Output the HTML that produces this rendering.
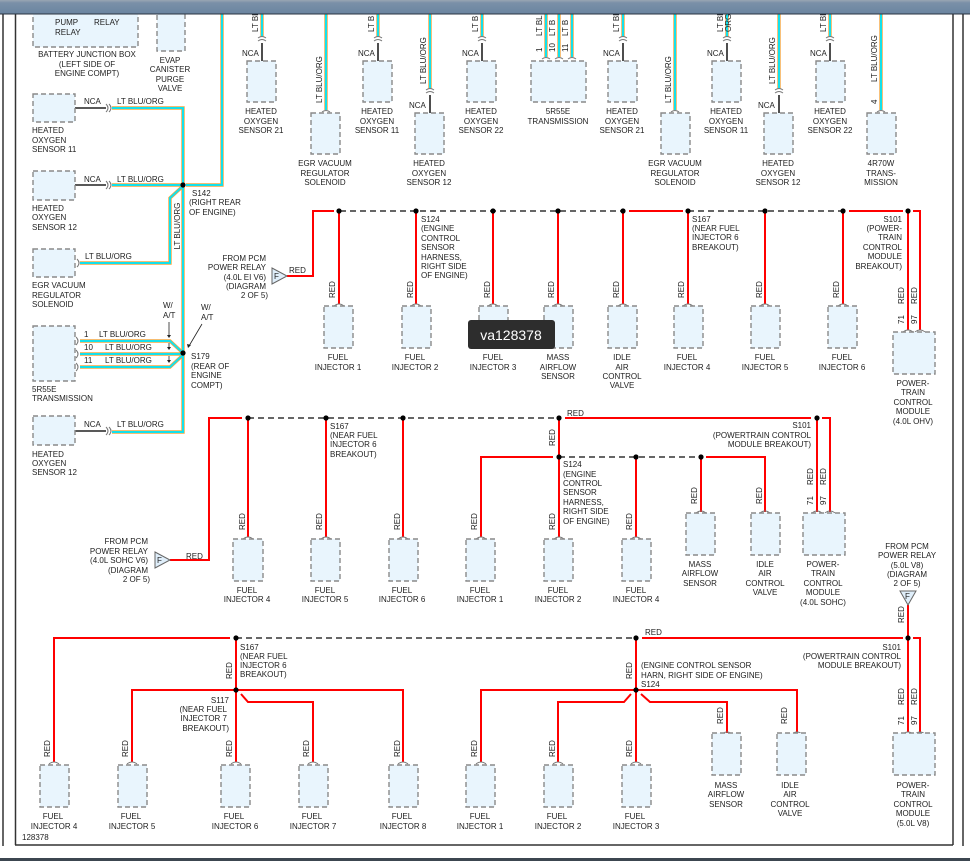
<!DOCTYPE html>
<html><head><meta charset="utf-8"><style>
html,body{margin:0;padding:0;background:#fff;width:970px;height:861px;overflow:hidden}
svg{display:block}
text{font-family:"Liberation Sans",sans-serif;font-size:8px;fill:#222}
.b{fill:#e9f5fd;stroke:#8a8a8a;stroke-width:1.4;stroke-dasharray:5 3}
.r{stroke:#f00;stroke-width:2;fill:none}
.d{stroke:#333;stroke-width:1.4;stroke-dasharray:6 4;fill:none}
.k{stroke:#222;stroke-width:1.6;fill:none}
.o{stroke:#f4a640;stroke-width:3.4;fill:none}
.c{stroke:#13e0ec;stroke-width:2;fill:none}
.a{stroke:#777;stroke-width:1;fill:none}
.m{text-anchor:middle}.e{text-anchor:end}
</style></head><body>
<svg width="970" height="861" viewBox="0 0 970 861" xmlns="http://www.w3.org/2000/svg">
<defs><linearGradient id="g" x1="0" y1="0" x2="0" y2="1"><stop offset="0" stop-color="#9aa6b3"/><stop offset="0.2" stop-color="#7a90a8"/><stop offset="1" stop-color="#6a84a0"/></linearGradient></defs>
<rect width="970" height="861" fill="#fff"/>
<!-- frame -->
<line x1="3" y1="14" x2="3" y2="846" stroke="#333" stroke-width="1.5"/>
<line x1="15.5" y1="14" x2="15.5" y2="845" stroke="#333" stroke-width="1.5"/>
<line x1="15" y1="845" x2="953" y2="845" stroke="#333" stroke-width="1.5"/>
<line x1="953" y1="14" x2="953" y2="845" stroke="#333" stroke-width="1.5"/>
<line x1="963" y1="14" x2="963" y2="846" stroke="#333" stroke-width="1.5"/>
<rect x="0" y="858" width="970" height="3" fill="#3c4650"/>

<!-- ===== TOP LEFT ===== -->
<rect class="b" x="33" y="2" width="105" height="45"/>
<text x="55" y="25">PUMP</text><text x="94" y="25">RELAY</text><text x="55" y="35">RELAY</text>
<text class="m" x="87" y="57">BATTERY JUNCTION BOX</text><text class="m" x="87" y="67">(LEFT SIDE OF</text><text class="m" x="87" y="76">ENGINE COMPT)</text>
<rect class="b" x="157" y="2" width="28" height="49"/>
<text class="m" x="170" y="63">EVAP</text><text class="m" x="170" y="72">CANISTER</text><text class="m" x="170" y="82">PURGE</text><text class="m" x="170" y="91">VALVE</text>

<!-- cyan wires left -->
<g>
<path class="o" d="M222 14V185H186M112 108H183V432H112M112 185H183M80 263H170V198L183 186M80 341H170L183 353M80 354H183M80 367H170L183 355"/>
<path class="c" d="M222 14V185H186M112 108H183V432H112M112 185H183M80 263H170V198L183 186M80 341H170L183 353M80 354H183M80 367H170L183 355"/>
</g>
<path class="k" d="M75 108H106M75 185H106M75 431H106"/>
<path class="a" d="M106 104q4 4 0 8M109 104q4 4 0 8M106 181q4 4 0 8M109 181q4 4 0 8M106 427q4 4 0 8M109 427q4 4 0 8M77 259q4 4 0 8M76 337q4 4 0 8M76 350q4 4 0 8M76 363q4 4 0 8"/>
<circle cx="183" cy="185" r="2.6" fill="#000"/><circle cx="183" cy="353" r="2.6" fill="#000"/>
<rect class="b" x="33" y="94" width="42" height="28"/>
<text x="84" y="104">NCA</text><text x="117" y="104">LT BLU/ORG</text>
<text x="32" y="133">HEATED</text><text x="32" y="143">OXYGEN</text><text x="32" y="152">SENSOR 11</text>
<rect class="b" x="33" y="171" width="42" height="29"/>
<text x="84" y="182">NCA</text><text x="117" y="182">LT BLU/ORG</text>
<text x="32" y="211">HEATED</text><text x="32" y="220">OXYGEN</text><text x="32" y="230">SENSOR 12</text>
<text transform="rotate(-90 180 226)" class="m" x="180" y="226">LT BLU/ORG</text>
<text x="192" y="196">S142</text><text x="189" y="205">(RIGHT REAR</text><text x="189" y="215">OF ENGINE)</text>
<rect class="b" x="33" y="249" width="42" height="28"/>
<text x="85" y="259">LT BLU/ORG</text>
<text x="32" y="288">EGR VACUUM</text><text x="32" y="298">REGULATOR</text><text x="32" y="307">SOLENOID</text>
<rect class="b" x="33" y="326" width="42" height="55"/>
<text x="32" y="392">5R55E</text><text x="32" y="401">TRANSMISSION</text>
<text x="84" y="337">1</text><text x="99" y="337">LT BLU/ORG</text>
<text x="84" y="350">10</text><text x="105" y="350">LT BLU/ORG</text>
<text x="84" y="363">11</text><text x="105" y="363">LT BLU/ORG</text>
<text x="163" y="308">W/</text><text x="163" y="318">A/T</text>
<text x="201" y="310">W/</text><text x="201" y="320">A/T</text>
<path stroke="#222" stroke-width="0.8" fill="none" d="M169 322V337M202 324L189 346M169 343V349M169 356V362"/>
<path fill="#222" d="M167 335h4l-2 3zM167 347h4l-2 3zM167 360h4l-2 3zM187 344l4 1-3 3z"/>
<text x="191" y="359">S179</text><text x="191" y="369">(REAR OF</text><text x="191" y="378">ENGINE</text><text x="191" y="388">COMPT)</text>
<rect class="b" x="33" y="416" width="42" height="29"/>
<text x="84" y="427">NCA</text><text x="117" y="427">LT BLU/ORG</text>
<text x="32" y="457">HEATED</text><text x="32" y="466">OXYGEN</text><text x="32" y="475">SENSOR 12</text>

<!-- ===== TOP ROW SENSORS ===== -->
<g>
<path class="o" d="M262 14V37M326 14V110M378 14V37M430 14V89M482 14V37M546 14V57M559 14V57M572 14V57M623 14V37M675 14V110M727 14V37M779 14V89M830 14V37M881 14V110"/>
<path class="c" d="M262 14V37M326 14V110M378 14V37M430 14V89M482 14V37M546 14V57M559 14V57M572 14V57M623 14V37M675 14V110M727 14V37M779 14V89M830 14V37M881 14V110"/>
</g>
<path class="k" d="M262 43V61M378 43V61M482 43V61M623 43V61M727 43V61M830 43V61M430 95V113M779 95V113"/>
<path class="a" d="M258 38q4 -3 8 0M258 41q4 -3 8 0M374 38q4 -3 8 0M374 41q4 -3 8 0M478 38q4 -3 8 0M478 41q4 -3 8 0M619 38q4 -3 8 0M619 41q4 -3 8 0M723 38q4 -3 8 0M723 41q4 -3 8 0M826 38q4 -3 8 0M826 41q4 -3 8 0M426 90q4 -3 8 0M426 93q4 -3 8 0M775 90q4 -3 8 0M775 93q4 -3 8 0M322 112q4 -3 8 0M671 112q4 -3 8 0M877 112q4 -3 8 0M542 59q4 -3 8 0M555 59q4 -3 8 0M568 59q4 -3 8 0"/>
<g>
<text x="242" y="56">NCA</text><text x="358" y="56">NCA</text><text x="462" y="56">NCA</text><text x="603" y="56">NCA</text><text x="707" y="56">NCA</text><text x="810" y="56">NCA</text>
<text x="409" y="108">NCA</text><text x="758" y="108">NCA</text>
<text transform="rotate(-90 258 32)" x="258" y="32">LT BL</text>
<text transform="rotate(-90 374 32)" x="374" y="32">LT B</text>
<text transform="rotate(-90 478 32)" x="478" y="32">LT B</text>
<text transform="rotate(-90 619 32)" x="619" y="32">LT BL</text>
<text transform="rotate(-90 723 32)" x="723" y="32">LT BL</text>
<text transform="rotate(-90 731 32)" x="731" y="32">ORG</text>
<text transform="rotate(-90 826 32)" x="826" y="32">LT BL</text>
<text transform="rotate(-90 542 36)" x="542" y="36">LT BL</text>
<text transform="rotate(-90 555 36)" x="555" y="36">LT B</text>
<text transform="rotate(-90 568 36)" x="568" y="36">LT B</text>
<text transform="rotate(-90 542 52)" x="542" y="52">1</text>
<text transform="rotate(-90 555 52)" x="555" y="52">10</text>
<text transform="rotate(-90 568 52)" x="568" y="52">11</text>
<text transform="rotate(-90 322 103)" x="322" y="103">LT BLU/ORG</text>
<text transform="rotate(-90 426 84)" x="426" y="84">LT BLU/ORG</text>
<text transform="rotate(-90 671 103)" x="671" y="103">LT BLU/ORG</text>
<text transform="rotate(-90 775 84)" x="775" y="84">LT BLU/ORG</text>
<text transform="rotate(-90 877 82)" x="877" y="82">LT BLU/ORG</text>
<text transform="rotate(-90 877 104)" x="877" y="104">4</text>
</g>
<rect class="b" x="247" y="61" width="29" height="41"/><rect class="b" x="311" y="113" width="29" height="41"/>
<rect class="b" x="363" y="61" width="29" height="41"/><rect class="b" x="415" y="113" width="29" height="41"/>
<rect class="b" x="467" y="61" width="29" height="41"/><rect class="b" x="531" y="61" width="55" height="41"/>
<rect class="b" x="608" y="61" width="29" height="41"/><rect class="b" x="661" y="113" width="29" height="41"/>
<rect class="b" x="712" y="61" width="29" height="41"/><rect class="b" x="764" y="113" width="29" height="41"/>
<rect class="b" x="816" y="61" width="29" height="41"/><rect class="b" x="867" y="113" width="29" height="41"/>
<g class="m">
<text class="m" x="261" y="114">HEATED</text><text class="m" x="261" y="124">OXYGEN</text><text class="m" x="261" y="133">SENSOR 21</text>
<text class="m" x="325" y="166">EGR VACUUM</text><text class="m" x="325" y="176">REGULATOR</text><text class="m" x="325" y="185">SOLENOID</text>
<text class="m" x="377" y="114">HEATED</text><text class="m" x="377" y="124">OXYGEN</text><text class="m" x="377" y="133">SENSOR 11</text>
<text class="m" x="429" y="166">HEATED</text><text class="m" x="429" y="176">OXYGEN</text><text class="m" x="429" y="185">SENSOR 12</text>
<text class="m" x="481" y="114">HEATED</text><text class="m" x="481" y="124">OXYGEN</text><text class="m" x="481" y="133">SENSOR 22</text>
<text class="m" x="558" y="114">5R55E</text><text class="m" x="558" y="124">TRANSMISSION</text>
<text class="m" x="622" y="114">HEATED</text><text class="m" x="622" y="124">OXYGEN</text><text class="m" x="622" y="133">SENSOR 21</text>
<text class="m" x="675" y="166">EGR VACUUM</text><text class="m" x="675" y="176">REGULATOR</text><text class="m" x="675" y="185">SOLENOID</text>
<text class="m" x="726" y="114">HEATED</text><text class="m" x="726" y="124">OXYGEN</text><text class="m" x="726" y="133">SENSOR 11</text>
<text class="m" x="778" y="166">HEATED</text><text class="m" x="778" y="176">OXYGEN</text><text class="m" x="778" y="185">SENSOR 12</text>
<text class="m" x="830" y="114">HEATED</text><text class="m" x="830" y="124">OXYGEN</text><text class="m" x="830" y="133">SENSOR 22</text>
<text class="m" x="881" y="166">4R70W</text><text class="m" x="881" y="176">TRANS-</text><text class="m" x="881" y="185">MISSION</text>
</g>

<!-- ===== SECTION 1 (4.0L EI V6) ===== -->
<path class="r" d="M287 276H313V211H334M629 211H683M849 211H903M913 211H920V330M908 211V330M339 211V304M416 211V304M493 211V304M558 211V304M623 211V304M688 211V304M765 211V304M843 211V304"/>
<path class="d" d="M340 211H625M688 211H843"/>
<g fill="#000"><circle cx="339" cy="211" r="2.6"/><circle cx="416" cy="211" r="2.6"/><circle cx="493" cy="211" r="2.6"/><circle cx="558" cy="211" r="2.6"/><circle cx="623" cy="211" r="2.6"/><circle cx="688" cy="211" r="2.6"/><circle cx="765" cy="211" r="2.6"/><circle cx="843" cy="211" r="2.6"/><circle cx="908" cy="211" r="2.6"/></g>
<path d="M272 268L287 276L272 284Z" fill="#dfeefa" stroke="#666"/><text x="274" y="279">F</text>
<text class="e" x="266" y="261">FROM PCM</text><text class="e" x="266" y="270">POWER RELAY</text><text class="e" x="266" y="280">(4.0L EI V6)</text><text class="e" x="266" y="289">(DIAGRAM</text><text class="e" x="268" y="298">2 OF 5)</text>
<text x="289" y="273">RED</text>
<text x="421" y="222">S124</text><text x="421" y="231">(ENGINE</text><text x="421" y="241">CONTROL</text><text x="421" y="250">SENSOR</text><text x="421" y="260">HARNESS,</text><text x="421" y="269">RIGHT SIDE</text><text x="421" y="278">OF ENGINE)</text>
<text x="692" y="222">S167</text><text x="692" y="231">(NEAR FUEL</text><text x="692" y="240">INJECTOR 6</text><text x="692" y="250">BREAKOUT)</text>
<text class="e" x="902" y="222">S101</text><text class="e" x="902" y="231">(POWER-</text><text class="e" x="902" y="240">TRAIN</text><text class="e" x="902" y="250">CONTROL</text><text class="e" x="902" y="259">MODULE</text><text class="e" x="902" y="269">BREAKOUT)</text>
<g>
<text transform="rotate(-90 335 298)" x="335" y="298">RED</text><text transform="rotate(-90 413 298)" x="413" y="298">RED</text><text transform="rotate(-90 490 298)" x="490" y="298">RED</text><text transform="rotate(-90 554 298)" x="554" y="298">RED</text><text transform="rotate(-90 619 298)" x="619" y="298">RED</text><text transform="rotate(-90 684 298)" x="684" y="298">RED</text><text transform="rotate(-90 762 298)" x="762" y="298">RED</text><text transform="rotate(-90 839 298)" x="839" y="298">RED</text>
<text transform="rotate(-90 904 304)" x="904" y="304">RED</text><text transform="rotate(-90 917 304)" x="917" y="304">RED</text>
<text transform="rotate(-90 904 324)" x="904" y="324">71</text><text transform="rotate(-90 917 324)" x="917" y="324">97</text>
</g>
<path class="a" d="M334 306q5 -4 10 0M411 306q5 -4 10 0M488 306q5 -4 10 0M553 306q5 -4 10 0M618 306q5 -4 10 0M683 306q5 -4 10 0M760 306q5 -4 10 0M838 306q5 -4 10 0M903 332q5 -4 10 0M915 332q5 -4 10 0"/>
<rect class="b" x="324" y="306" width="29" height="42"/><rect class="b" x="402" y="306" width="29" height="42"/><rect class="b" x="479" y="306" width="29" height="42"/><rect class="b" x="544" y="306" width="29" height="42"/><rect class="b" x="608" y="306" width="29" height="42"/><rect class="b" x="674" y="306" width="29" height="42"/><rect class="b" x="751" y="306" width="29" height="42"/><rect class="b" x="828" y="306" width="29" height="42"/>
<rect class="b" x="893" y="332" width="42" height="42"/>
<text class="m" x="338" y="360">FUEL</text><text class="m" x="338" y="370">INJECTOR 1</text>
<text class="m" x="415" y="360">FUEL</text><text class="m" x="415" y="370">INJECTOR 2</text>
<text class="m" x="493" y="360">FUEL</text><text class="m" x="493" y="370">INJECTOR 3</text>
<text class="m" x="558" y="360">MASS</text><text class="m" x="558" y="370">AIRFLOW</text><text class="m" x="558" y="379">SENSOR</text>
<text class="m" x="622" y="360">IDLE</text><text class="m" x="622" y="370">AIR</text><text class="m" x="622" y="379">CONTROL</text><text class="m" x="622" y="388">VALVE</text>
<text class="m" x="687" y="360">FUEL</text><text class="m" x="687" y="370">INJECTOR 4</text>
<text class="m" x="765" y="360">FUEL</text><text class="m" x="765" y="370">INJECTOR 5</text>
<text class="m" x="842" y="360">FUEL</text><text class="m" x="842" y="370">INJECTOR 6</text>
<text class="m" x="913" y="386">POWER-</text><text class="m" x="913" y="395">TRAIN</text><text class="m" x="913" y="405">CONTROL</text><text class="m" x="913" y="414">MODULE</text><text class="m" x="913" y="424">(4.0L OHV)</text>
<rect x="468" y="320" width="87" height="29" rx="3" fill="#2d2d2d"/>
<text class="m" x="511" y="340" style="font-size:14px;fill:#fff">va128378</text>

<!-- ===== SECTION 2 (4.0L SOHC) ===== -->
<path class="r" d="M170 560H209V418H242M565 418H811M822 418H830V512M817 418V512M248 418V537M326 418V537M403 418V537M559 418V537M481 512V457H553M706 457H765V512M481 457V537M636 457V537M701 457V512"/>
<path class="d" d="M248 418H558M559 457H701"/>
<g fill="#000"><circle cx="248" cy="418" r="2.6"/><circle cx="326" cy="418" r="2.6"/><circle cx="403" cy="418" r="2.6"/><circle cx="559" cy="418" r="2.6"/><circle cx="817" cy="418" r="2.6"/><circle cx="559" cy="457" r="2.6"/><circle cx="636" cy="457" r="2.6"/><circle cx="701" cy="457" r="2.6"/></g>
<path d="M155 552L170 560L155 568Z" fill="#dfeefa" stroke="#666"/><text x="157" y="563">F</text>
<text class="e" x="148" y="544">FROM PCM</text><text class="e" x="148" y="554">POWER RELAY</text><text class="e" x="148" y="563">(4.0L SOHC V6)</text><text class="e" x="148" y="573">(DIAGRAM</text><text class="e" x="150" y="582">2 OF 5)</text>
<text x="186" y="559">RED</text><text x="567" y="416">RED</text>
<text x="330" y="429">S167</text><text x="330" y="438">(NEAR FUEL</text><text x="330" y="447">INJECTOR 6</text><text x="330" y="457">BREAKOUT)</text>
<text x="563" y="467">S124</text><text x="563" y="477">(ENGINE</text><text x="563" y="486">CONTROL</text><text x="563" y="495">SENSOR</text><text x="563" y="505">HARNESS,</text><text x="563" y="514">RIGHT SIDE</text><text x="563" y="524">OF ENGINE)</text>
<text class="e" x="811" y="428">S101</text><text class="e" x="811" y="438">(POWERTRAIN CONTROL</text><text class="e" x="811" y="447">MODULE BREAKOUT)</text>
<g>
<text transform="rotate(-90 245 530)" x="245" y="530">RED</text><text transform="rotate(-90 322 530)" x="322" y="530">RED</text><text transform="rotate(-90 400 530)" x="400" y="530">RED</text><text transform="rotate(-90 477 530)" x="477" y="530">RED</text><text transform="rotate(-90 555 530)" x="555" y="530">RED</text><text transform="rotate(-90 632 530)" x="632" y="530">RED</text><text transform="rotate(-90 697 504)" x="697" y="504">RED</text><text transform="rotate(-90 762 504)" x="762" y="504">RED</text><text transform="rotate(-90 555 446)" x="555" y="446">RED</text>
<text transform="rotate(-90 813 485)" x="813" y="485">RED</text><text transform="rotate(-90 826 485)" x="826" y="485">RED</text><text transform="rotate(-90 813 505)" x="813" y="505">71</text><text transform="rotate(-90 826 505)" x="826" y="505">97</text>
</g>
<path class="a" d="M243 539q5 -4 10 0M321 539q5 -4 10 0M398 539q5 -4 10 0M476 539q5 -4 10 0M554 539q5 -4 10 0M631 539q5 -4 10 0M696 513q5 -4 10 0M760 513q5 -4 10 0M812 513q5 -4 10 0M825 513q5 -4 10 0"/>
<rect class="b" x="233" y="539" width="30" height="42"/><rect class="b" x="311" y="539" width="29" height="42"/><rect class="b" x="389" y="539" width="29" height="42"/><rect class="b" x="466" y="539" width="29" height="42"/><rect class="b" x="544" y="539" width="29" height="42"/><rect class="b" x="622" y="539" width="29" height="42"/>
<rect class="b" x="686" y="513" width="29" height="42"/><rect class="b" x="751" y="513" width="29" height="42"/><rect class="b" x="803" y="513" width="42" height="42"/>
<text class="m" x="247" y="593">FUEL</text><text class="m" x="247" y="602">INJECTOR 4</text>
<text class="m" x="325" y="593">FUEL</text><text class="m" x="325" y="602">INJECTOR 5</text>
<text class="m" x="402" y="593">FUEL</text><text class="m" x="402" y="602">INJECTOR 6</text>
<text class="m" x="480" y="593">FUEL</text><text class="m" x="480" y="602">INJECTOR 1</text>
<text class="m" x="558" y="593">FUEL</text><text class="m" x="558" y="602">INJECTOR 2</text>
<text class="m" x="636" y="593">FUEL</text><text class="m" x="636" y="602">INJECTOR 4</text>
<text class="m" x="700" y="567">MASS</text><text class="m" x="700" y="576">AIRFLOW</text><text class="m" x="700" y="586">SENSOR</text>
<text class="m" x="765" y="567">IDLE</text><text class="m" x="765" y="576">AIR</text><text class="m" x="765" y="586">CONTROL</text><text class="m" x="765" y="595">VALVE</text>
<text class="m" x="823" y="567">POWER-</text><text class="m" x="823" y="576">TRAIN</text><text class="m" x="823" y="586">CONTROL</text><text class="m" x="823" y="595">MODULE</text><text class="m" x="823" y="605">(4.0L SOHC)</text>

<!-- ===== SECTION 3 (5.0L V8) ===== -->
<path class="r" d="M54 762V638H230M642 638H903M913 638H920V732M908 605V732M236 638V762M132 762V690H403V762M241 694L248 702H313V762M636 638V762M481 762V690H797V733M631 694L624 702H558V762M641 694L650 702H727V733"/>
<path class="d" d="M236 638H636"/>
<g fill="#000"><circle cx="236" cy="638" r="2.6"/><circle cx="636" cy="638" r="2.6"/><circle cx="908" cy="638" r="2.6"/><circle cx="236" cy="690" r="2.6"/><circle cx="636" cy="690" r="2.6"/></g>
<path d="M900 591L916 591L908 605Z" fill="#dfeefa" stroke="#666"/><text x="905" y="599">F</text>
<text class="m" x="907" y="549">FROM PCM</text><text class="m" x="907" y="558">POWER RELAY</text><text class="m" x="907" y="568">(5.0L V8)</text><text class="m" x="907" y="577">(DIAGRAM</text><text class="m" x="907" y="586">2 OF 5)</text>
<text x="645" y="635">RED</text>
<text x="240" y="650">S167</text><text x="240" y="659">(NEAR FUEL</text><text x="240" y="668">INJECTOR 6</text><text x="240" y="677">BREAKOUT)</text>
<text class="e" x="229" y="703">S117</text><text class="e" x="227" y="712">(NEAR FUEL</text><text class="e" x="227" y="721">INJECTOR 7</text><text class="e" x="229" y="731">BREAKOUT)</text>
<text x="641" y="668">(ENGINE CONTROL SENSOR</text><text x="641" y="678">HARN, RIGHT SIDE OF ENGINE)</text><text x="641" y="687">S124</text>
<text class="e" x="901" y="650">S101</text><text class="e" x="901" y="659">(POWERTRAIN CONTROL</text><text class="e" x="901" y="668">MODULE BREAKOUT)</text>
<g>
<text transform="rotate(-90 50 757)" x="50" y="757">RED</text><text transform="rotate(-90 128 757)" x="128" y="757">RED</text><text transform="rotate(-90 232 757)" x="232" y="757">RED</text><text transform="rotate(-90 309 757)" x="309" y="757">RED</text><text transform="rotate(-90 400 757)" x="400" y="757">RED</text><text transform="rotate(-90 477 757)" x="477" y="757">RED</text><text transform="rotate(-90 555 757)" x="555" y="757">RED</text><text transform="rotate(-90 632 757)" x="632" y="757">RED</text>
<text transform="rotate(-90 723 724)" x="723" y="724">RED</text><text transform="rotate(-90 787 724)" x="787" y="724">RED</text>
<text transform="rotate(-90 232 679)" x="232" y="679">RED</text><text transform="rotate(-90 632 679)" x="632" y="679">RED</text><text transform="rotate(-90 904 623)" x="904" y="623">RED</text>
<text transform="rotate(-90 904 705)" x="904" y="705">RED</text><text transform="rotate(-90 917 705)" x="917" y="705">RED</text><text transform="rotate(-90 904 725)" x="904" y="725">71</text><text transform="rotate(-90 917 725)" x="917" y="725">97</text>
</g>
<path class="a" d="M49 764q5 -4 10 0M127 764q5 -4 10 0M231 764q5 -4 10 0M308 764q5 -4 10 0M398 764q5 -4 10 0M476 764q5 -4 10 0M553 764q5 -4 10 0M631 764q5 -4 10 0M722 734q5 -4 10 0M792 734q5 -4 10 0M903 734q5 -4 10 0M915 734q5 -4 10 0"/>
<rect class="b" x="40" y="765" width="29" height="42"/><rect class="b" x="118" y="765" width="29" height="42"/><rect class="b" x="221" y="765" width="29" height="42"/><rect class="b" x="299" y="765" width="29" height="42"/><rect class="b" x="389" y="765" width="29" height="42"/><rect class="b" x="466" y="765" width="29" height="42"/><rect class="b" x="544" y="765" width="29" height="42"/><rect class="b" x="622" y="765" width="29" height="42"/>
<rect class="b" x="712" y="733" width="29" height="42"/><rect class="b" x="777" y="733" width="29" height="42"/><rect class="b" x="893" y="733" width="42" height="42"/>
<text class="m" x="53" y="819">FUEL</text><text class="m" x="54" y="829">INJECTOR 4</text>
<text class="m" x="131" y="819">FUEL</text><text class="m" x="132" y="829">INJECTOR 5</text>
<text class="m" x="234" y="819">FUEL</text><text class="m" x="235" y="829">INJECTOR 6</text>
<text class="m" x="312" y="819">FUEL</text><text class="m" x="313" y="829">INJECTOR 7</text>
<text class="m" x="402" y="819">FUEL</text><text class="m" x="403" y="829">INJECTOR 8</text>
<text class="m" x="480" y="819">FUEL</text><text class="m" x="480" y="829">INJECTOR 1</text>
<text class="m" x="557" y="819">FUEL</text><text class="m" x="558" y="829">INJECTOR 2</text>
<text class="m" x="635" y="819">FUEL</text><text class="m" x="636" y="829">INJECTOR 3</text>
<text class="m" x="726" y="788">MASS</text><text class="m" x="726" y="797">AIRFLOW</text><text class="m" x="726" y="807">SENSOR</text>
<text class="m" x="790" y="788">IDLE</text><text class="m" x="790" y="797">AIR</text><text class="m" x="790" y="807">CONTROL</text><text class="m" x="790" y="816">VALVE</text>
<text class="m" x="913" y="788">POWER-</text><text class="m" x="913" y="797">TRAIN</text><text class="m" x="913" y="807">CONTROL</text><text class="m" x="913" y="816">MODULE</text><text class="m" x="913" y="826">(5.0L V8)</text>
<text x="22" y="840">128378</text>

<!-- header bar -->
<rect x="0" y="0" width="970" height="14" fill="url(#g)"/>
<line x1="0" y1="14" x2="970" y2="14" stroke="#2a3340" stroke-width="1"/>
</svg>
</body></html>
